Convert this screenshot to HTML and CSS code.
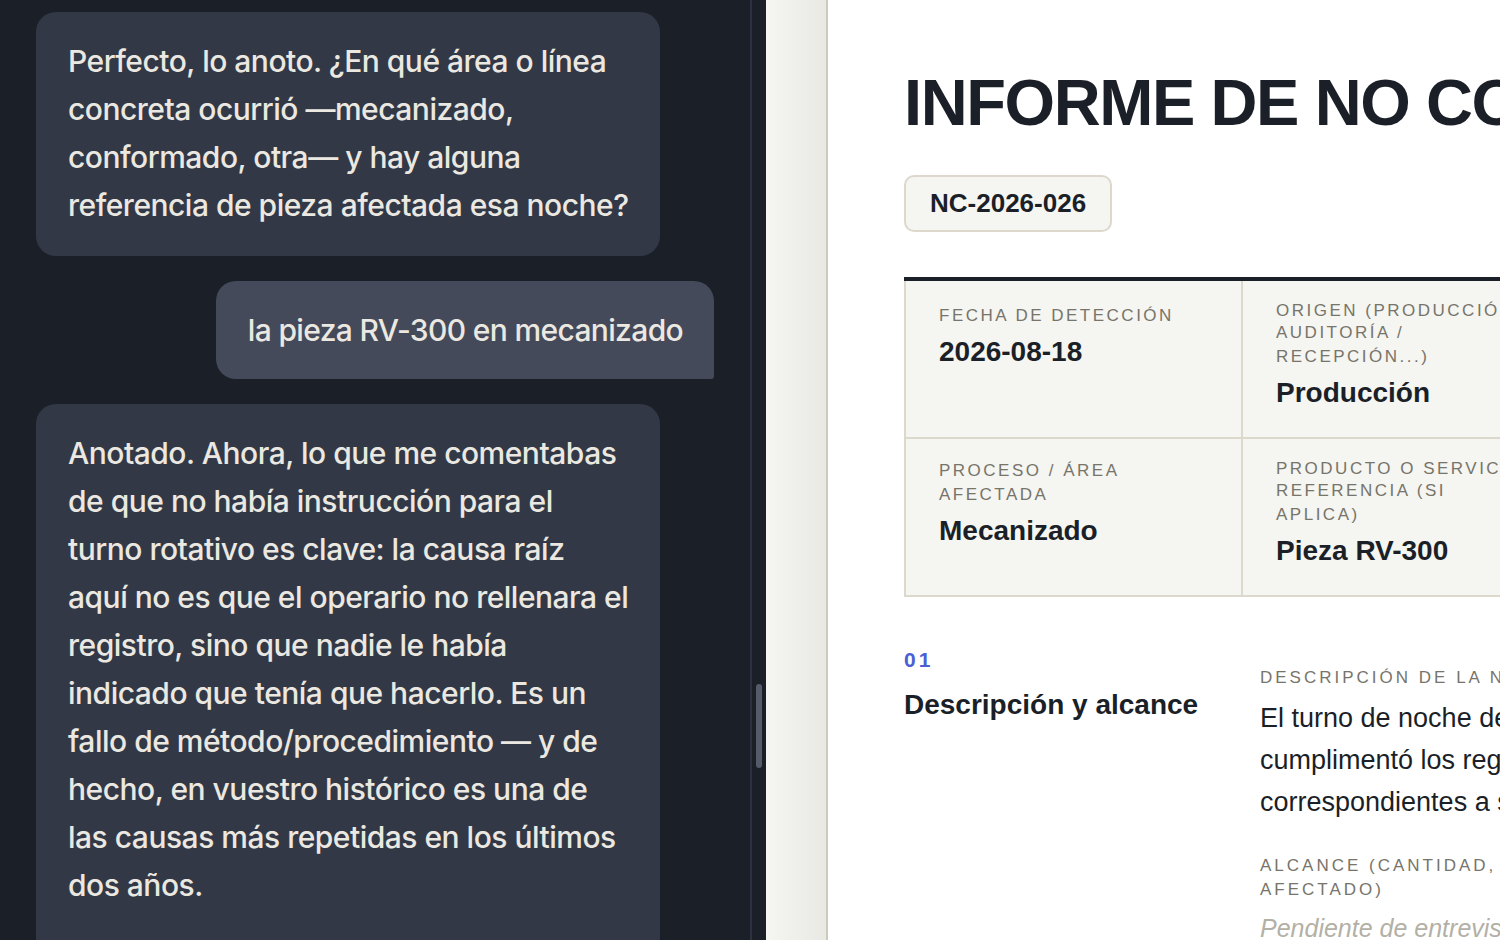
FILE: index.html
```html
<!DOCTYPE html>
<html lang="es">
<head>
  <meta charset="UTF-8">
  <meta name="viewport" content="width=device-width, initial-scale=1.0">
  <title>Informe de no conformidad</title>
  <link rel="stylesheet" href="styles.css">
</head>
<body>
  <div class="app">
    <aside class="chat">
      <div class="chat-scroll">
        <div class="msg bot">
          Perfecto, lo anoto. ¿En qué área o línea concreta ocurrió —mecanizado, conformado, otra— y hay alguna referencia de pieza afectada esa noche?
        </div>
        <div class="msg user">la pieza RV-300 en mecanizado</div>
        <div class="msg bot">
          Anotado. Ahora, lo que me comentabas de que no había instrucción para el turno rotativo es clave: la causa raíz aquí no es que el operario no rellenara el registro, sino que nadie le había indicado que tenía que hacerlo. Es un fallo de método/procedimiento — y de hecho, en vuestro histórico es una de las causas más repetidas en los últimos dos años.
        </div>
      </div>
      <div class="chat-track">
        <span class="chat-thumb"></span>
      </div>
    </aside>

    <div class="gutter"></div>

    <main class="doc">
      <h1 class="doc-title">INFORME DE NO CONFORMIDAD</h1>
      <span class="doc-code">NC-2026-026</span>

      <div class="meta">
        <div class="meta-cell">
          <div class="meta-label">Fecha de detección</div>
          <div class="meta-value">2026-08-18</div>
        </div>
        <div class="meta-cell">
          <div class="meta-label wrap"><span class="first">Origen (producción /</span> auditoría / recepción...)</div>
          <div class="meta-value">Producción</div>
        </div>
        <div class="meta-cell">
          <div class="meta-label wrap">Proceso / área afectada</div>
          <div class="meta-value">Mecanizado</div>
        </div>
        <div class="meta-cell">
          <div class="meta-label wrap"><span class="first">Producto o servicio /</span> referencia (si aplica)</div>
          <div class="meta-value">Pieza RV-300</div>
        </div>
      </div>

      <section class="block">
        <div class="block-head">
          <div class="block-num">01</div>
          <h2 class="block-title">Descripción y alcance</h2>
        </div>
        <div class="block-body">
          <div class="field">
            <div class="field-label">Descripción de la no conformidad</div>
            <p class="field-text">El turno de noche del 18 de agosto no cumplimentó los registros de producción correspondientes a su puesto.</p>
          </div>
          <div class="field">
            <div class="field-label">Alcance (cantidad, lote, producto afectado)</div>
            <p class="field-text pending">Pendiente de entrevista con el responsable</p>
          </div>
        </div>
      </section>
    </main>
  </div>
</body>
</html>
```

FILE: styles.css
```css
* {
  box-sizing: border-box;
}

body {
  margin: 0;
  background-color: #ffffff;
  font-family: "Liberation Sans", Arial, sans-serif;
  color: #1b1f27;
}

.app {
  display: flex;
  height: 940px;
  overflow: hidden;
}

/* chat panel */
.chat {
  display: flex;
  flex: 0 0 766px;
  background-color: #1b1f28;
}

.chat-scroll {
  flex: 0 0 752px;
  display: flex;
  flex-direction: column;
  gap: 25px;
  padding: 12px 36px 0 36px;
  border-right: 2px solid #2d3240;
  overflow: hidden;
}

.msg {
  font-family: Inter, "Liberation Sans", sans-serif;
  font-size: 30px;
  font-weight: 500;
  line-height: 48px;
  color: #ebe8e1;
  letter-spacing: -0.5px;
}

.msg.bot {
  width: 624px;
  padding: 25px 31px 27px 32px;
  background-color: #323846;
  border-radius: 20px;
}

.msg.bot:last-child {
  padding-bottom: 48px;
}

.msg.user {
  align-self: flex-end;
  padding: 25px 31px 25px 32px;
  background-color: #444a5a;
  border-radius: 20px 20px 3px 20px;
  letter-spacing: -0.65px;
}

.chat-track {
  flex: 1;
  padding: 684px 4px 0 4px;
}

.chat-thumb {
  display: block;
  width: 6px;
  height: 84px;
  border-radius: 3px;
  background-color: #565b69;
}

.gutter {
  flex: 0 0 62px;
  background: linear-gradient(to right, #f5f5f1, #e9e9e4);
  border-right: 2px solid #cdc9bb;
}

/* document */
.doc {
  flex: 1;
  min-width: 0;
  padding: 67px 0 0 76px;
  overflow: hidden;
  white-space: nowrap;
}

.doc-title {
  margin: 0 0 36px 0;
  font-size: 65px;
  line-height: 72px;
  font-weight: bold;
  letter-spacing: -1.4px;
}

.doc-code {
  display: inline-block;
  padding: 11px 24px;
  font-size: 26px;
  line-height: 31px;
  font-weight: bold;
  background-color: #f5f5f1;
  border: 2px solid #dcd9cc;
  border-radius: 10px;
}

.meta {
  display: grid;
  grid-template-columns: 335px 335px;
  gap: 2px;
  width: 676px;
  margin-top: 45px;
  padding: 0 2px 2px 2px;
  background-color: #dcd9cc;
  border-top: 4px solid #1b1f27;
  white-space: normal;
}

.meta-cell {
  height: 156px;
  padding: 23px 50px 0 33px;
  background-color: #f5f5f1;
}

.meta-label,
.field-label {
  font-size: 17px;
  line-height: 24px;
  letter-spacing: 2.5px;
  text-transform: uppercase;
  color: #77746a;
}

.meta-label.wrap {
  margin-top: -3px;
}

.meta-label .first {
  display: block;
  line-height: 20px;
  white-space: nowrap;
}

.meta-value {
  margin-top: 6px;
  font-size: 28px;
  line-height: 36px;
  font-weight: bold;
}

/* numbered sections */
.block {
  display: grid;
  grid-template-columns: 320px 520px;
  column-gap: 36px;
  margin-top: 51px;
  white-space: normal;
}

.block-num {
  font-size: 21px;
  line-height: 24px;
  font-weight: bold;
  letter-spacing: 3px;
  color: #4c5fd5;
}

.block-title {
  margin: 15px 0 0 0;
  font-size: 28px;
  line-height: 36px;
  font-weight: bold;
}

.block-body {
  padding-top: 18px;
}

.field-label {
  letter-spacing: 3px;
}

.field + .field {
  margin-top: 31px;
}

.field-text {
  margin: 7px 0 0 0;
  font-size: 27px;
  line-height: 42px;
  color: #1b1f27;
}

.field-text.pending {
  margin-top: 5px;
  font-size: 25px;
  font-style: italic;
  color: #b3b0a6;
}
```
